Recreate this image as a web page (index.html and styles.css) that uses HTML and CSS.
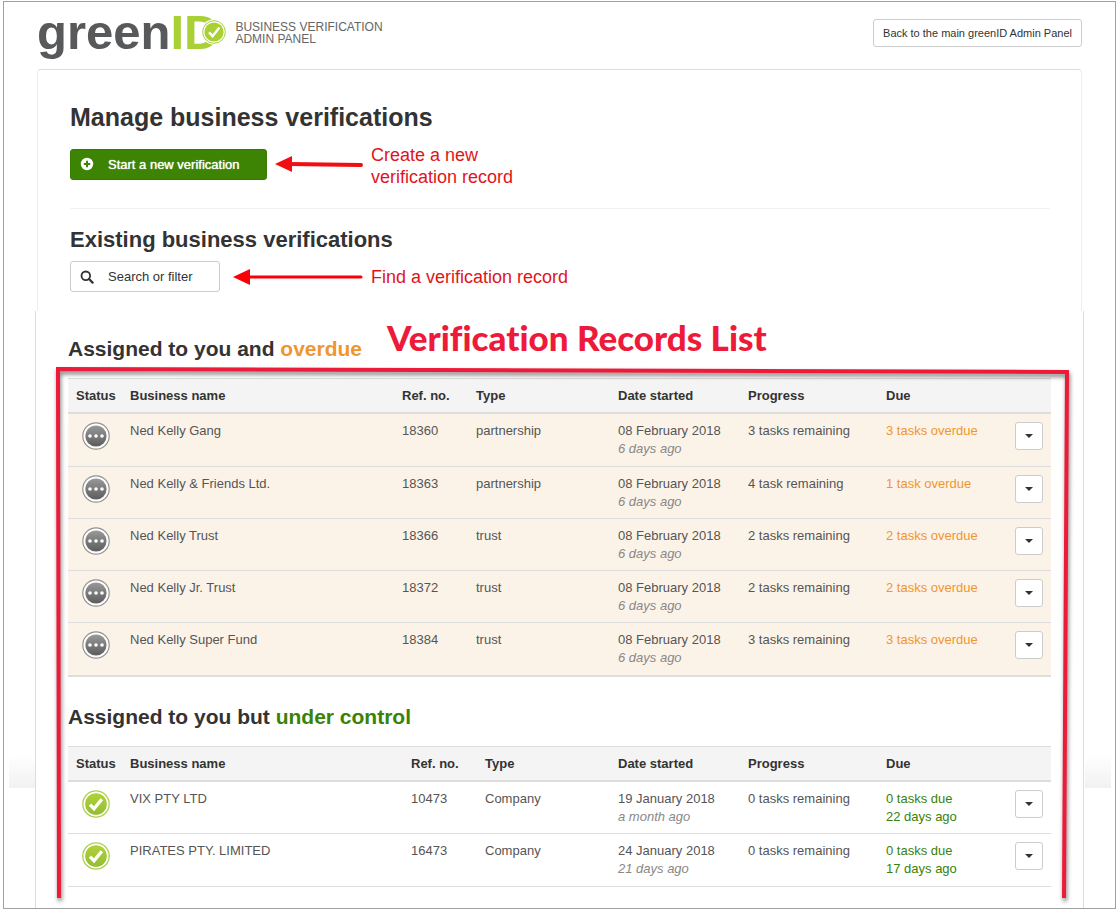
FILE: index.html
```html
<!DOCTYPE html>
<html lang="en">
<head>
<meta charset="utf-8">
<title>greenID Business Verification Admin Panel</title>
<link rel="stylesheet" href="styles.css">
</head>
<body>
<svg width="0" height="0" class="defs" aria-hidden="true">
  <defs>
    <linearGradient id="grey" x1="0" y1="0" x2="0" y2="1"><stop offset="0" stop-color="#999"/><stop offset="1" stop-color="#5c5c5c"/></linearGradient>
    <linearGradient id="green" x1="0" y1="0" x2="0" y2="1"><stop offset="0" stop-color="#b0d236"/><stop offset="1" stop-color="#94bd35"/></linearGradient>
    <symbol id="pending" viewBox="0 0 28 28">
      <circle cx="14" cy="14" r="13.2" fill="#fff" stroke="#929292" stroke-width="1.2"/>
      <circle cx="14" cy="14" r="10.6" fill="url(#grey)"/>
      <circle cx="8" cy="14" r="1.8" fill="#fff"/><circle cx="14" cy="14" r="1.8" fill="#fff"/><circle cx="20" cy="14" r="1.8" fill="#fff"/>
    </symbol>
    <symbol id="done" viewBox="0 0 28 28">
      <circle cx="14" cy="14" r="13.2" fill="#fff" stroke="#add04e" stroke-width="1.3"/>
      <circle cx="14" cy="14" r="10.8" fill="url(#green)"/>
      <path d="M8 14.6l4 4.2 7.8-9.6" fill="none" stroke="#fff" stroke-width="3.4"/>
    </symbol>
  </defs>
</svg>
<div class="frame">
  <header class="top">
    <div class="brand">
      <div class="logo">green<span class="logo-id">ID</span>
        <svg class="logo-tick" viewBox="0 0 26 26" aria-hidden="true">
          <circle cx="13" cy="13" r="12.8" fill="#fff"/>
          <circle cx="13" cy="13" r="11.3" fill="#fff" stroke="#a9d034" stroke-width="1"/>
          <circle cx="13" cy="13" r="9.6" fill="#a9d034"/>
          <path d="M8 13.4l3.6 3.8 6.8-8.6" fill="none" stroke="#fff" stroke-width="2.4"/>
        </svg>
      </div>
      <div class="tagline">BUSINESS VERIFICATION<br>ADMIN PANEL</div>
    </div>
    <a class="back" href="#">Back to the main greenID Admin Panel</a>
  </header>

  <section class="panel">
    <h1>Manage business verifications</h1>
    <div class="row row-new">
      <button class="btn btn-new" type="button">
        <svg width="14" height="14" viewBox="0 0 14 14" aria-hidden="true"><circle cx="7" cy="7" r="6.2" fill="#fff"/><path d="M7 3.8v6.4M3.8 7h6.4" stroke="#3d8304" stroke-width="2"/></svg>
        Start a new verification
      </button>
      <svg class="arrow" width="88" height="20" viewBox="0 0 88 20" aria-hidden="true"><path d="M14 10L86 11" stroke="#f20d12" stroke-width="4" stroke-linecap="round"/><path d="M0 10L17 2v16z" fill="#f20d12"/></svg>
      <p class="note">Create a new<br>verification record</p>
    </div>
    <hr>
    <h2>Existing business verifications</h2>
    <div class="row row-find">
      <button class="btn btn-find" type="button">
        <svg width="14" height="14" viewBox="0 0 14 14" aria-hidden="true"><circle cx="5.8" cy="5.8" r="4.3" fill="none" stroke="#333" stroke-width="1.8"/><path d="M9 9l3.6 3.6" stroke="#333" stroke-width="2.2" stroke-linecap="round"/></svg>
        Search or filter
      </button>
      <svg class="arrow" width="130" height="20" viewBox="0 0 130 20" aria-hidden="true"><path d="M14 10H128" stroke="#fb0007" stroke-width="3" stroke-linecap="round"/><path d="M0 10L17 2v16z" fill="#fb0007"/></svg>
      <p class="note">Find a verification record</p>
    </div>
  </section>

  <main class="records">
    <div class="heading">
      <h3>Assigned to you and <span class="late">overdue</span></h3>
      <p class="callout">Verification Records List</p>
    </div>
    <div class="lists">
      <table class="late-list">
        <thead><tr><th class="c-status">Status</th><th>Business name</th><th class="c-ref">Ref. no.</th><th class="c-type">Type</th><th class="c-date">Date started</th><th class="c-prog">Progress</th><th class="c-due">Due</th><th class="c-menu"></th></tr></thead>
        <tbody>
          <tr><td class="status"><svg><use href="#pending"/></svg></td><td>Ned Kelly Gang</td><td>18360</td><td>partnership</td><td>08 February 2018<br><em>6 days ago</em></td><td>3 tasks remaining</td><td class="late">3 tasks overdue</td><td class="menu"><button type="button" aria-label="Actions"></button></td></tr>
          <tr><td class="status"><svg><use href="#pending"/></svg></td><td>Ned Kelly &amp; Friends Ltd.</td><td>18363</td><td>partnership</td><td>08 February 2018<br><em>6 days ago</em></td><td>4 task remaining</td><td class="late">1 task overdue</td><td class="menu"><button type="button" aria-label="Actions"></button></td></tr>
          <tr><td class="status"><svg><use href="#pending"/></svg></td><td>Ned Kelly Trust</td><td>18366</td><td>trust</td><td>08 February 2018<br><em>6 days ago</em></td><td>2 tasks remaining</td><td class="late">2 tasks overdue</td><td class="menu"><button type="button" aria-label="Actions"></button></td></tr>
          <tr><td class="status"><svg><use href="#pending"/></svg></td><td>Ned Kelly Jr. Trust</td><td>18372</td><td>trust</td><td>08 February 2018<br><em>6 days ago</em></td><td>2 tasks remaining</td><td class="late">2 tasks overdue</td><td class="menu"><button type="button" aria-label="Actions"></button></td></tr>
          <tr><td class="status"><svg><use href="#pending"/></svg></td><td>Ned Kelly Super Fund</td><td>18384</td><td>trust</td><td>08 February 2018<br><em>6 days ago</em></td><td>3 tasks remaining</td><td class="late">3 tasks overdue</td><td class="menu"><button type="button" aria-label="Actions"></button></td></tr>
        </tbody>
      </table>
      <h3 class="second">Assigned to you but <span class="ok">under control</span></h3>
      <table class="ok-list">
        <thead><tr><th class="c-status">Status</th><th>Business name</th><th class="c-ref">Ref. no.</th><th class="c-type">Type</th><th class="c-date">Date started</th><th class="c-prog">Progress</th><th class="c-due">Due</th><th class="c-menu"></th></tr></thead>
        <tbody>
          <tr><td class="status"><svg><use href="#done"/></svg></td><td>VIX PTY LTD</td><td>10473</td><td>Company</td><td>19 January 2018<br><em>a month ago</em></td><td>0 tasks remaining</td><td class="ok">0 tasks due<br>22 days ago</td><td class="menu"><button type="button" aria-label="Actions"></button></td></tr>
          <tr><td class="status"><svg><use href="#done"/></svg></td><td>PIRATES PTY. LIMITED</td><td>16473</td><td>Company</td><td>24 January 2018<br><em>21 days ago</em></td><td>0 tasks remaining</td><td class="ok">0 tasks due<br>17 days ago</td><td class="menu"><button type="button" aria-label="Actions"></button></td></tr>
        </tbody>
      </table>
      <svg class="outline" viewBox="0 0 1014 532" preserveAspectRatio="none" aria-hidden="true">
        <path d="M4 531L3 2L1012 5L1009 531" fill="none" stroke="#ee1a3a" stroke-width="4"/>
      </svg>
    </div>
  </main>
</div>
</body>
</html>
```
FILE: styles.css
```css
* { box-sizing: border-box; }
body {
  margin: 0;
  background: #fff;
  color: #555;
  font-family: "Liberation Sans", Arial, sans-serif;
  font-size: 13px;
  line-height: 18px;
}
h1, h2, h3, p { margin: 0; }
h1, h2, h3 { color: #333; font-weight: bold; }
.defs { position: absolute; }

.frame {
  margin: 1px 2px 3px 3px;
  border: 1px solid #a0a0a0;
  background:
    linear-gradient(#fff, #f1f1f1) left 5px top 753px / 26px 33px no-repeat,
    linear-gradient(#fff, #f1f1f1) right 4px top 753px / 26px 33px no-repeat;
}

.top {
  display: flex;
  justify-content: space-between;
  align-items: flex-start;
  height: 67px;
  padding: 0 33px;
}
.brand { display: flex; gap: 16px; }
.logo {
  position: relative;
  padding-top: 2px;
  color: #58595b;
  font-size: 49px;
  font-weight: bold;
  line-height: 56px;
}
.logo-id { color: #a9d034; }
.logo-tick {
  position: absolute;
  top: 17px;
  right: -8px;
  width: 26px;
  height: 26px;
}
.tagline {
  padding-top: 19px;
  color: #666;
  font-size: 12px;
  line-height: 12px;
}
.back {
  margin-top: 17px;
  padding: 4px 9px;
  border: 1px solid #ccc;
  border-radius: 3px;
  color: #333;
  font-size: 11px;
  text-decoration: none;
}

.panel {
  margin: 0 33px;
  padding: 32px 31px 19px 32px;
  border: 1px solid #eee;
  border-top-color: #ddd;
  border-bottom: 0;
  border-radius: 4px 4px 0 0;
}
h1 { font-size: 25px; line-height: 30px; }
h2 { font-size: 22px; line-height: 26px; }
h3 { font-size: 21px; line-height: 26px; }

.row { display: flex; align-items: center; }
.row-new { height: 44px; margin-top: 10px; }
.row-new .note { margin-top: 4px; }
.row-find { height: 31px; margin-top: 8px; }
.btn {
  display: flex;
  align-items: center;
  gap: 14px;
  height: 31px;
  padding: 0 9px;
  border: 1px solid #ccc;
  border-radius: 3px;
  font: 13px "Liberation Sans", Arial, sans-serif;
}
.btn-new {
  width: 197px;
  border-color: #397a04;
  background: #3d8304;
  color: #fff;
  text-shadow: 0 0 1px #fff;
}
.btn-find { width: 150px; background: #fff; color: #333; }
.row-new .arrow { margin: 0 8px; }
.row-find .arrow { margin: 0 8px 0 13px; }
.note { color: #e0141b; font-size: 18px; line-height: 22px; }
hr {
  height: 1px;
  margin: 22px 0 18px;
  border: 0;
  background: #f0f0f0;
}

.records {
  margin: 0 31px;
  padding: 9px 32px 21px;
  border: solid #ddd;
  border-width: 0 1px;
}
.heading { display: flex; gap: 25px; margin-bottom: 16px; }
.heading h3 { padding-top: 16px; }
.callout {
  color: #ee1a3a;
  font-family: Lato, sans-serif;
  font-size: 35px;
  font-weight: 900;
  font-variant-ligatures: none;
  line-height: 34px;
}
.late { color: #f0962e; }
.ok { color: #3a8208; }

.lists { position: relative; }
.second { margin: 27px 0 16px; }
table {
  width: 100%;
  border-spacing: 0;
  table-layout: fixed;
}
th {
  padding: 8px 8px 7px;
  border-top: 1px solid #ddd;
  border-bottom: 2px solid #ddd;
  background: #f4f4f4;
  color: #333;
  text-align: left;
}
td {
  height: 52px;
  padding: 8px 8px 7px;
  border-bottom: 1px solid #ddd;
  vertical-align: top;
}
em { color: #888; }
.late-list td { background: #fcf3e8; }
.late-list tr:first-child td { height: 53px; }
.late-list tr:last-child td { height: 54px; border-bottom-width: 2px; }
.ok-list tr:last-child td { height: 53px; }
.c-status { width: 54px; }
.c-ref { width: 74px; }
.c-type { width: 142px; }
.ok-list .c-type { width: 133px; }
.c-date { width: 130px; }
.c-prog { width: 138px; }
.c-due { width: 129px; }
.c-menu { width: 44px; }
.status { padding-left: 14px; }
.status svg { display: block; width: 28px; height: 28px; }
.menu button {
  display: flex;
  align-items: center;
  justify-content: center;
  width: 28px;
  height: 28px;
  padding: 0;
  border: 1px solid #ccc;
  border-radius: 3px;
  background: #fff;
}
.menu button::before {
  content: "";
  border: solid transparent;
  border-width: 4px 4px 0;
  border-top-color: #333;
}
th:first-child { padding-right: 0; }

.outline {
  position: absolute;
  top: -11px;
  left: -13px;
  width: calc(100% + 31px);
  height: 532px;
  overflow: visible;
  pointer-events: none;
  filter: drop-shadow(1px 3px 2px rgba(0, 0, 0, 0.5));
}
```
